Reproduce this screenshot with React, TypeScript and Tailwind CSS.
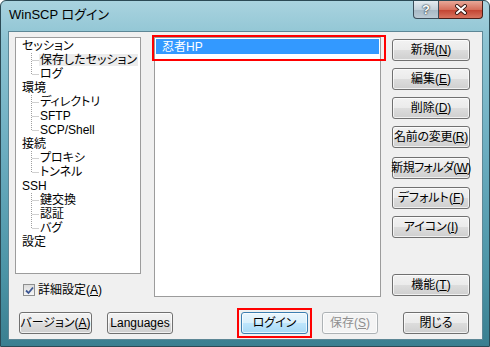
import React from 'react';

type BtnProps = {
  children: React.ReactNode;
  className?: string;
  variant?: 'normal' | 'default' | 'disabled';
};

function Btn({ children, className = '', variant = 'normal' }: BtnProps) {
  const look =
    variant === 'default'
      ? 'border-[#3c7fb1] bg-[linear-gradient(#eaf6fd_0%,#d9f0fc_49%,#bee6fd_50%,#a7d9f5_100%)] text-black'
      : variant === 'disabled'
        ? 'border-[#adb2b5] bg-[#f4f4f4] text-[#8f8f8f]'
        : 'border-[#707070] bg-[linear-gradient(#f2f2f2_0%,#ebebeb_49%,#dddddd_50%,#cfcfcf_100%)] text-black';
  return (
    <div
      className={`flex h-[22px] shrink-0 items-center justify-center whitespace-nowrap rounded-[3px] border text-[12px] leading-none shadow-[inset_0_0_0_1px_rgba(255,255,255,0.7)] ${look} ${className}`}
    >
      {children}
    </div>
  );
}

const tree = [
  { label: 'セッション', children: ['保存したセッション', 'ログ'] },
  { label: '環境', children: ['ディレクトリ', 'SFTP', 'SCP/Shell'] },
  { label: '接続', children: ['プロキシ', 'トンネル'] },
  { label: 'SSH', children: ['鍵交換', '認証', 'バグ'] },
  { label: '設定', children: [] as string[] },
];

function Connector({ last }: { last: boolean }) {
  return (
    <svg width="9" height="14" className="shrink-0 text-[#a0a0a0]">
      <line x1="0.5" y1="0" x2="0.5" y2={last ? 7.5 : 14} stroke="currentColor" strokeDasharray="1 1" />
      <line x1="1.5" y1="7.5" x2="8" y2="7.5" stroke="currentColor" strokeDasharray="1 1" />
    </svg>
  );
}

export default function App() {
  return (
    <div className="flex h-[347px] w-[490px] flex-col overflow-hidden rounded-t-[6px] border border-[#2b4a55] bg-[linear-gradient(180deg,#a9d3df_0%,#8cc3d2_12%,#6aacbf_45%,#4a93a5_80%,#3a7f90_100%)] font-['Liberation_Sans','Noto_Sans_CJK_JP',sans-serif] [font-feature-settings:'palt']">
      {/* Title bar */}
      <div className="flex h-[30px] shrink-0 items-start">
        <div className="pl-[8px] pt-[6px] text-[13px] leading-[16px] text-black">WinSCP ログイン</div>
        <div className="ml-auto mr-[6px] flex">
          <div className="flex h-[18px] w-[26px] items-center justify-center rounded-bl-[4px] border border-t-0 border-[#3b4d59] bg-[linear-gradient(#e4ecf1_0%,#c3d1da_50%,#a6b8c4_51%,#bccbd5_100%)] text-[13px] font-bold leading-none text-white [text-shadow:0_0_2px_#1c2a33,0_0_1px_#1c2a33]">
            ?
          </div>
          <div className="flex h-[18px] w-[44px] items-center justify-center rounded-br-[4px] border border-l-0 border-t-0 border-[#4a1e18] bg-[linear-gradient(#e8a898_0%,#d6705c_50%,#c2412f_51%,#d8745f_100%)]">
            <svg width="14" height="11" viewBox="0 0 14 11">
              <path d="M3 2 L11 9 M11 2 L3 9" stroke="#3a1a14" strokeWidth="4" strokeLinecap="round" />
              <path d="M3 2 L11 9 M11 2 L3 9" stroke="#ffffff" strokeWidth="2.2" strokeLinecap="round" />
            </svg>
          </div>
        </div>
      </div>

      {/* Client area */}
      <div className="mb-[6px] ml-[7px] mr-[6px] flex flex-1 flex-col border border-[#5d8796] bg-[#f0f0f0] pl-[6px] pr-[12px] pt-[5px] text-[12px] text-black">
        <div className="flex h-[260px] shrink-0">
          {/* Left column */}
          <div className="flex w-[126px] flex-col">
            <div className="h-[240px] border border-[#9c9c9c] bg-white pl-[6px] pt-[1px] leading-[14px]">
              {tree.map((g) => (
                <div key={g.label}>
                  <div className="h-[14px]">{g.label}</div>
                  {g.children.map((c, i) => (
                    <div key={c} className="flex h-[14px] items-center pl-[9px]">
                      <Connector last={i === g.children.length - 1} />
                      <span
                        className={
                          c === '保存したセッション'
                            ? 'ml-[-1px] bg-[#ececec] px-[1px] leading-[12px]'
                            : 'leading-[14px]'
                        }
                      >
                        {c}
                      </span>
                    </div>
                  ))}
                </div>
              ))}
            </div>
            <div className="mt-[9px] flex items-center pl-[8px]">
              <div className="flex h-[12px] w-[12px] items-center justify-center border border-[#8e8f8f] bg-[linear-gradient(#dcdcdc,#f6f6f6)]">
                <svg width="9" height="9" viewBox="0 0 9 9">
                  <path d="M1 4.5 L3.5 7 L8 1.5" fill="none" stroke="#3d5793" strokeWidth="1.8" />
                </svg>
              </div>
              <span className="ml-[3px] leading-[14px]">
                詳細設定(<u className="underline-offset-[1px]">A</u>)
              </span>
            </div>
          </div>

          {/* Session list */}
          <div className="relative ml-[13px] w-[227px] border border-[#9c9c9c] bg-white px-[1px] pt-[1px]">
            <div className="flex h-[15px] items-center bg-[#3399ff] pl-[6px] text-white">忍者HP</div>
            <div className="absolute left-[-3px] top-[-3px] h-[26px] w-[234px] border-2 border-[#ff0000]" />
          </div>

          {/* Right buttons */}
          <div className="ml-[11px] flex w-[78px] flex-col">
            <Btn className="mt-[2px]">
              新規(<u>N</u>)
            </Btn>
            <Btn className="mt-[7px]">
              編集(<u>E</u>)
            </Btn>
            <Btn className="mt-[7px]">
              削除(<u>D</u>)
            </Btn>
            <Btn className="mt-[7px] tracking-[-0.3px]">
              名前の変更(<u>R</u>)
            </Btn>
            <Btn className="mt-[9px] text-[11px] tracking-[-0.6px]">
              新規フォルダ(<u>W</u>)
            </Btn>
            <Btn className="mt-[8px]">
              デフォルト(<u>F</u>)
            </Btn>
            <Btn className="mt-[7px]">
              アイコン(<u>I</u>)
            </Btn>
            <Btn className="mb-[1px] mt-auto">
              機能(<u>T</u>)
            </Btn>
          </div>
        </div>

        {/* Bottom buttons */}
        <div className="mt-[11px] flex items-center">
          <Btn className="ml-[4px] w-[73px]">
            バージョン(<u>A</u>)
          </Btn>
          <Btn className="ml-[15px] w-[66px]">
            Lan<u>g</u>uages
          </Btn>
          <div className="ml-[64px] border-2 border-[#ff0000] p-[2px]">
            <Btn variant="default" className="w-[67px]">
              ログイン
            </Btn>
          </div>
          <Btn variant="disabled" className="ml-[10px] w-[56px]">
            保存(<u>S</u>)
          </Btn>
          <Btn className="ml-[25px] w-[66px]">閉じる</Btn>
        </div>
      </div>
    </div>
  );
}
